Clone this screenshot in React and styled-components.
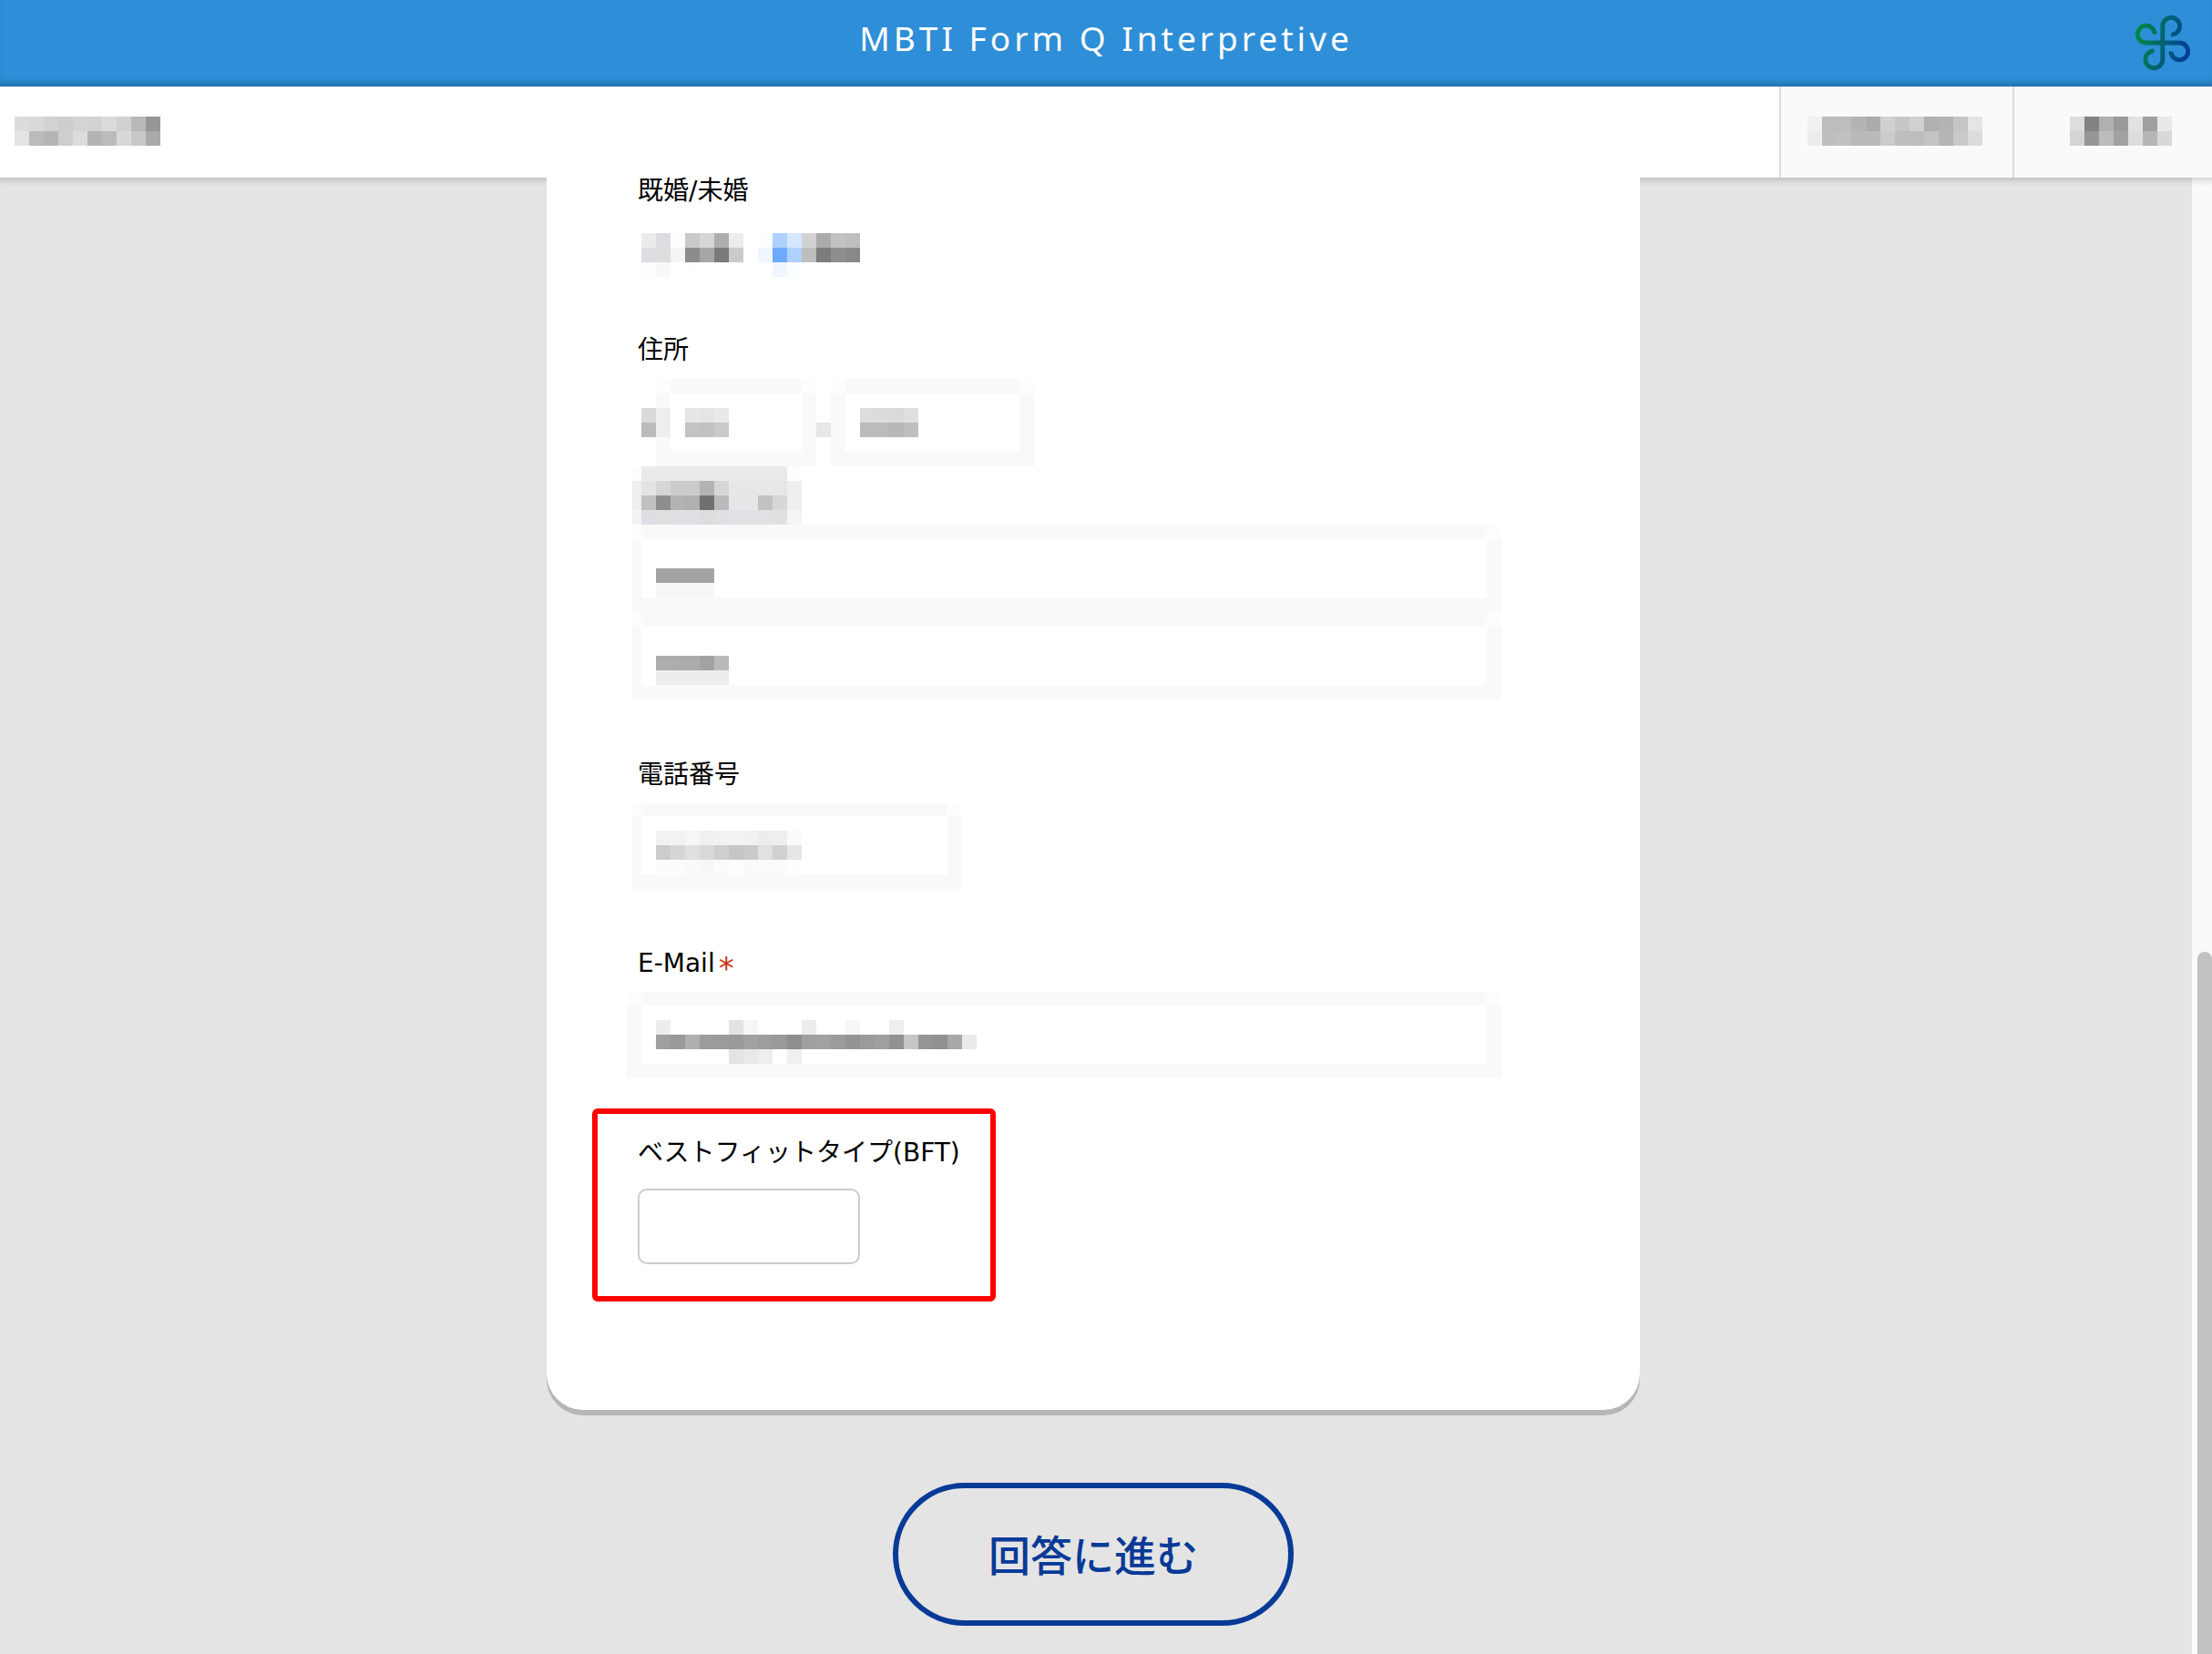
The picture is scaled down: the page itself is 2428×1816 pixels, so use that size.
import React from "react";
import styled, { createGlobalStyle } from "styled-components";

const GlobalStyle = createGlobalStyle`
  * {
    box-sizing: border-box;
  }
  body {
    margin: 0;
    color: #000;
    background-color: #e4e4e4;
    font-family: "DejaVu Sans", "Noto Sans CJK JP", sans-serif;
    font-size: 28px;
  }
`;

const PageContainer = styled.div`
  min-height: 100vh;
  display: flex;
  flex-direction: column;
`;

const Header = styled.header`
  position: relative;
  height: 95px;
  padding-bottom: 12px;
  display: flex;
  align-items: center;
  justify-content: center;
  background-color: #2e8ed7;
  box-shadow: inset 0 -8px 8px -6px rgba(0, 0, 0, 0.3);
`;

const Title = styled.h1`
  margin: 0;
  color: #fff;
  font-family: "Noto Sans", sans-serif;
  font-size: 37px;
  font-weight: 400;
  line-height: 48px;
  letter-spacing: 4px;
`;

const Logo = styled.svg`
  position: absolute;
  top: 17px;
  right: 24px;
  width: 60px;
  height: 60px;
`;

const SubHeader = styled.div`
  height: 100px;
  display: flex;
  background-color: #fff;
`;

const UserName = styled.div`
  flex: 1;
  display: flex;
  align-items: center;
  padding: 0 16px 2px;
`;

const NavLink = styled.a`
  display: flex;
  align-items: center;
  padding: ${(props) => (props.$wide ? "0 44px 2px 61px" : "0 33px 2px 29px")};
  border-left: 2px solid #dcdcdc;
  background-color: #fafafa;
`;

const Body = styled.div`
  flex: 1;
  display: flex;
  box-shadow: inset 0 10px 8px -8px rgba(0, 0, 0, 0.2);
`;

const Content = styled.main`
  flex: 1;
  padding: 0 6px 30px 0;
`;

const ScrollBar = styled.div`
  width: 22px;
  padding-left: 6px;
  display: grid;
  grid-template-rows: 850fr 771fr;
  background-color: #fafafa;
  box-shadow: inset 0 10px 8px -8px rgba(0, 0, 0, 0.2);
`;

const ScrollThumb = styled.div`
  grid-row: 2;
  border-radius: 8px 8px 0 0;
  background-color: #c1c1c1;
`;

const Card = styled.div`
  max-width: 1200px;
  margin: -8px auto 80px;
  padding: 0 100px 101px;
  border-radius: 0 0 40px 40px;
  background-color: #fff;
  box-shadow: 0 6px 0 #b6b6b6;
`;

const Group = styled.div`
  margin-bottom: 59px;
`;

const Label = styled.label`
  display: block;
  width: fit-content;
  margin-bottom: 8px;
  line-height: 46px;
`;

const Required = styled.span`
  margin-left: 4px;
  color: #cc3418;
  font-size: 34px;
  line-height: 0;
  vertical-align: -8px;
`;

const Highlight = styled(Group)`
  position: relative;
  width: fit-content;
  ${Label} {
    margin-bottom: 16px;
  }
  &::after {
    content: "";
    position: absolute;
    inset: -26px -39px -41px -50px;
    border: 6px solid #f00;
    border-radius: 6px;
    pointer-events: none;
  }
`;

const TextInput = styled.input`
  display: block;
  width: 244px;
  height: 83px;
  padding: 0 20px;
  border: 2px solid #ccc;
  border-radius: 10px;
  background-color: #fff;
  font: inherit;
`;

const RadioRow = styled.div`
  height: 62px;
  padding: 15px 4px 0;
  display: flex;
  gap: 16px;
`;

const RadioLabel = styled.label`
  position: relative;
  height: 48px;
  input {
    position: absolute;
    inset: 0;
    margin: 0;
    opacity: 0;
  }
`;

const FieldWrap = styled.div`
  position: relative;
  width: ${(props) => props.$width}px;
  max-width: 100%;
  margin-left: -${(props) => props.$bleed || 0}px;
  input {
    display: block;
    width: 100%;
    height: ${(props) => 80 + (props.$top || 16)}px;
    padding: 0 16px;
    border: 16px solid #f9f9f9;
    border-top-width: ${(props) => props.$top || 16}px;
    border-left-width: ${(props) => props.$left || 16}px;
    border-radius: 0;
    background-color: #fff;
    font: inherit;
  }
  svg {
    position: absolute;
    top: ${(props) => (props.$top || 16) + 16}px;
    left: ${(props) => (props.$left || 16) + 16}px;
    pointer-events: none;
  }
  &::before,
  &::after {
    content: "";
    position: absolute;
    top: 0;
    height: ${(props) => props.$top || 16}px;
    background-color: #fdfdfd;
  }
  &::before {
    left: 0;
    width: ${(props) => props.$left || 16}px;
  }
  &::after {
    right: 0;
    width: 16px;
  }
`;

const AddressStack = styled.div`
  padding-bottom: 1px;
`;

const ZipRow = styled.div`
  display: flex;
  align-items: center;
  padding-left: 4px;
`;

const ZipMark = styled.span`
  position: relative;
  z-index: 1;
  display: flex;
  margin-right: -16px;
`;

const SearchButton = styled.button`
  display: flex;
  justify-content: flex-end;
  width: 186px;
  margin: 0 0 0 -6px;
  padding: 0;
  border: none;
  background: none;
  overflow: hidden;
`;

const SubmitButton = styled.button`
  display: block;
  width: 440px;
  height: 157px;
  margin: 0 auto;
  padding: 0 0 4px;
  border: 6px solid #083a97;
  border-radius: 80px;
  background-color: transparent;
  color: #083a97;
  font-family: "Noto Sans CJK JP", sans-serif;
  font-size: 46px;
  font-weight: 500;
`;

const CELL = 16;

const MosaicSvg = styled.svg`
  display: block;
  flex: none;
`;

// rows: one string per line, two digits for a grey, six for a colour, -- for an empty cell
const Mosaic = ({ rows }) => {
  const cells = rows.map((row) => row.split(" "));
  const cols = Math.max(...cells.map((row) => row.length));
  return (
    <MosaicSvg
      width={cols * CELL}
      height={cells.length * CELL}
      shapeRendering="crispEdges"
      aria-hidden="true"
    >
      {cells.map((row, y) =>
        row.map((value, x) =>
          value === "--" ? null : (
            <rect
              key={`${x}-${y}`}
              x={x * CELL}
              y={y * CELL}
              width={CELL}
              height={CELL}
              fill={`#${value.length === 2 ? value.repeat(3) : value}`}
            />
          )
        )
      )}
    </MosaicSvg>
  );
};

const MaskedField = ({ rows, width, bleed, left, top, ...input }) => (
  <FieldWrap $width={width} $bleed={bleed} $left={left} $top={top}>
    <input {...input} />
    <Mosaic rows={rows} />
  </FieldWrap>
);

const userName = [
  "dc d9 d2 cd d4 d3 db d1 b9 96",
  "e4 bb b5 ce dc b3 bb d8 c8 a9",
];
const navFirst = [
  "f1 bd bd b4 ac d1 c6 d0 b0 b4 c5 e4",
  "ec be c0 b9 ba cb be bd c4 b5 ca dc",
];
const navSecond = ["dd 83 b0 99 e2 a0 e8", "d4 96 bc a2 dd b6 d8"];
const single = [
  "ebebed dddde1 fe c9 d6 ae ec",
  "dddde2 dddde0 f4 8c a7 7a cb",
  "fd f8 -- fe -- -- --",
];
const married = [
  "fdfeff aed1ff d6e7ff d2 ab c2 be",
  "eff6ff 6da9ff aed1ff be 7c 8e 88",
  "-- eff6ff fcfdff -- -- -- --",
];
const zipMark = ["d9 ee", "bb ee"];
const zipFirst = ["e6 e4 e9", "c3 c1 ca"];
const zipSecond = ["dd dc da df", "bb bb b8 be"];
const search = [
  "fc eaeaec eaeaec eaeaec eaeaec eaeaec eaeaec eaeaec eaeaec eaeaec eaeaec fd",
  "ee e4e4e7 d6 cb cb b3 d6 e7e7e9 e7e7e9 e7 e7 ef",
  "ee c0 8e b3 b0 70 bb e7e7e9 e7e7e9 c2 d8 ef",
  "f3 dddde3 df dfdfe4 dfdfe4 dd dfdfe4 e0e0e5 e0e0e5 e0e0e5 e0 f4",
];
const addressFirst = ["--", "a4 a4 a4 a4", "f6 f6 f6 f6"];
const addressSecond = ["--", "ad ac ab a2 ba", "ed ed ed ed ed"];
const phone = [
  "f2 f2 f6 f0 f2 f3 f1 ed ee fb",
  "cc d6 e0 d9 cf c5 ca e1 d1 e6",
  "fc fc fa f7 fb fd fa fb fb fd",
];
const email = [
  "ed -- -- -- -- e3 f6 -- -- -- ed -- -- f6 -- -- ed",
  "a0 99 af 9c 9b 9a a1 9d 9a 8e a0 a1 9b 94 9b 9f 92 c6 95 91 a8 ea",
  "-- -- -- -- -- e3 e9 ed -- f0",
];

export default () => {
  return (
    <PageContainer>
      <GlobalStyle />
      <Header>
        <Title>MBTI Form Q Interpretive</Title>
        <Logo viewBox="0 0 60 60" fill="none" aria-hidden="true">
          <defs>
            <linearGradient
              id="logo"
              gradientUnits="userSpaceOnUse"
              x1="4"
              y1="24"
              x2="56"
              y2="36"
            >
              <stop offset="0" stopColor="#008547" />
              <stop offset="0.5" stopColor="#00626f" />
              <stop offset="1" stopColor="#004097" />
            </linearGradient>
          </defs>
          <path
            stroke="url(#logo)"
            strokeWidth="4.8"
            d="M39.2 21.1a9.4 9.4 0 1 0-9.4-9.4V48.3a9.4 9.4 0 1 1-9.4-9.4M21.1 20.6a9.4 9.4 0 1 0-9.4 9.4H48.3a9.4 9.4 0 1 1-9.4 9.4"
          />
        </Logo>
      </Header>
      <SubHeader>
        <UserName>
          <Mosaic rows={userName} />
        </UserName>
        <NavLink href="#">
          <Mosaic rows={navFirst} />
        </NavLink>
        <NavLink href="#" $wide>
          <Mosaic rows={navSecond} />
        </NavLink>
      </SubHeader>
      <Body>
        <Content>
          <form>
            <Card>
              <Group role="radiogroup" aria-labelledby="marital">
                <Label as="div" id="marital">
                  既婚/未婚
                </Label>
                <RadioRow>
                  <RadioLabel>
                    <input type="radio" name="marital" aria-label="既婚" />
                    <Mosaic rows={single} />
                  </RadioLabel>
                  <RadioLabel>
                    <input
                      type="radio"
                      name="marital"
                      aria-label="未婚"
                      defaultChecked
                    />
                    <Mosaic rows={married} />
                  </RadioLabel>
                </RadioRow>
              </Group>

              <Group>
                <Label htmlFor="zip1">住所</Label>
                <AddressStack>
                  <ZipRow>
                    <ZipMark>
                      <Mosaic rows={zipMark} />
                    </ZipMark>
                    <MaskedField id="zip1" type="text" width={176} rows={zipFirst} />
                    <Mosaic rows={["--", "e7"]} />
                    <MaskedField
                      type="text"
                      aria-label="住所"
                      width={224}
                      rows={zipSecond}
                    />
                  </ZipRow>
                  <SearchButton type="button" aria-label="住所">
                    <Mosaic rows={search} />
                  </SearchButton>
                  <MaskedField
                    type="text"
                    aria-label="住所"
                    width={954}
                    bleed={6}
                    left={10}
                    rows={addressFirst}
                  />
                  <MaskedField
                    type="text"
                    aria-label="住所"
                    width={954}
                    bleed={6}
                    left={10}
                    rows={addressSecond}
                  />
                </AddressStack>
              </Group>

              <Group>
                <Label htmlFor="phone">電話番号</Label>
                <MaskedField
                  id="phone"
                  type="tel"
                  width={362}
                  bleed={6}
                  left={10}
                  top={14}
                  rows={phone}
                />
              </Group>

              <Group>
                <Label htmlFor="email">
                  E-Mail<Required>*</Required>
                </Label>
                <MaskedField
                  id="email"
                  type="email"
                  width={960}
                  bleed={12}
                  left={16}
                  top={15}
                  rows={email}
                />
              </Group>

              <Highlight>
                <Label htmlFor="bft">ベストフィットタイプ(BFT)</Label>
                <TextInput id="bft" type="text" />
              </Highlight>
            </Card>
            <SubmitButton type="submit">回答に進む</SubmitButton>
          </form>
        </Content>
        <ScrollBar>
          <ScrollThumb />
        </ScrollBar>
      </Body>
    </PageContainer>
  );
};
